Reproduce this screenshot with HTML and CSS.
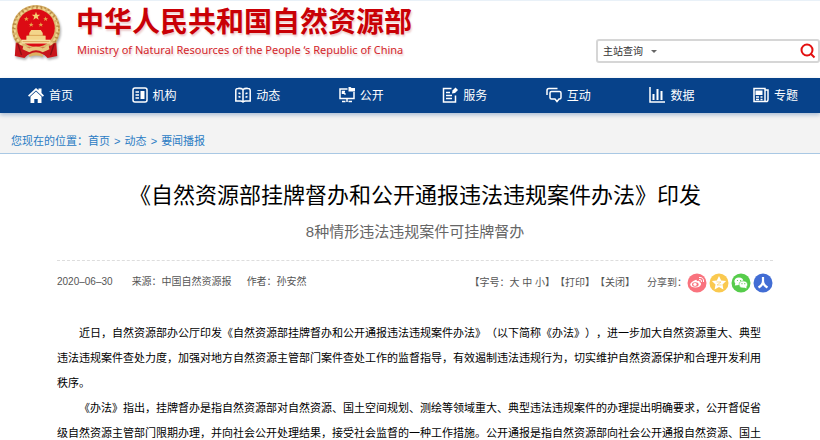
FILE: index.html
```
<!DOCTYPE html>
<html lang="zh-CN">
<head>
  <meta charset="utf-8">
  <title>《自然资源部挂牌督办和公开通报违法违规案件办法》印发</title>
  <link rel="stylesheet" href="styles.css">
</head>
<body>
  <header class="header">
    <a class="brand" href="#">
      <svg class="emblem" viewBox="0 0 54 58" aria-hidden="true">
        <path d="M6 40 L5 54 L15 56 L20 51 H34 L39 56 L49 54 L48 40Z" fill="#c8151b"/>
        <circle cx="27" cy="26" r="25" fill="#d9b56c"/>
        <circle cx="27" cy="26" r="23" fill="none" stroke="#b98a45" stroke-width="3" stroke-dasharray="2 2"/>
        <circle cx="27" cy="26" r="22" fill="none" stroke="#f0d591" stroke-width="2" stroke-dasharray="3 2"/>
        <circle cx="27" cy="25" r="19.500" fill="#dc0b14"/>
        <path d="M27 8l1.100 3.100h3.300l-2.600 2 1 3.200-2.800-1.900-2.800 1.900 1-3.200-2.600-2h3.300z" fill="#f5d071"/>
        <g fill="#e9a54b">
          <path d="M17 13l.7 1.600h1.800l-1.400 1.100.5 1.800-1.600-1-1.600 1 .5-1.800-1.400-1.100h1.800z"/>
          <path d="M37 13l.7 1.600h1.800l-1.400 1.100.5 1.800-1.600-1-1.600 1 .5-1.800-1.400-1.100h1.800z"/>
          <path d="M22 19l.7 1.600h1.800l-1.400 1.100.5 1.800-1.600-1-1.600 1 .5-1.800-1.400-1.100h1.800z"/>
          <path d="M32 19l.7 1.600h1.800l-1.400 1.100.5 1.800-1.600-1-1.600 1 .5-1.800-1.400-1.100h1.800z"/>
        </g>
        <path d="M22 27h10l2 3H20z M20 30h14v3H20z M17 33h20v5H17z" fill="#f3d58a"/>
        <path d="M12 37h30v4H12z" fill="#f7e3a6"/>
        <path d="M18 32.500h18 M13 39h28" stroke="#cf8a3c" stroke-width=".7"/>
        <path d="M7 40q8 7 20 5q12 2 20-5l1 9q-7 1-10 5l-4-2H20l-4 2q-3-4-10-5z" fill="#c8151b"/>
        <path d="M14 43l6 3q7-4 14 0l6-3 1 4-7 3q-7-4-14 0l-7-3z" fill="#e8c77d"/>
        <path d="M20 52q7-4 14 0v3q-7-3-14 0z" fill="#dcb262"/>
        <path d="M8 41l4 12 M46 41l-4 12" stroke="#8e0f14" stroke-width="1.500"/>
      </svg>
      <span class="brand-text">
        <span class="brand-cn">中华人民共和国自然资源部</span>
        <span class="brand-en">Ministry of Natural Resources of the People ‘s Republic of China</span>
      </span>
    </a>
    <form class="search" action="#">
      <span class="search-scope">
        <select class="search-select" aria-label="查询范围">
          <option>主站查询</option>
        </select>
      </span>
      <input class="search-input" type="text" aria-label="关键词">
      <button class="search-btn" type="submit" aria-label="搜索">
        <svg viewBox="0 0 16 16" width="16" height="16" fill="none" stroke="#e30f0f" stroke-width="2"><circle cx="7" cy="7" r="5.500"/><path d="M10.500 10.500l4 4"/></svg>
      </button>
    </form>
  </header>

  <nav class="nav">
    <a class="nav-item" href="#">
      <svg class="nav-icon" viewBox="0 0 16 16"><path d="M0 8.500L8 1l2.500 2.300V1.500h3v4.600L16 8.500l-1.200 1.200L8 3.500 1.200 9.700z" fill="#fff"/><path d="M2.500 9.500L8 4.600l5.500 4.900V16H9.700v-4H6.300v4H2.500z" fill="#fff"/></svg>首页</a>
    <a class="nav-item" href="#">
      <svg class="nav-icon" viewBox="0 0 16 16"><rect x="1" y="1" width="14" height="14" rx="2"/><path d="M3.500 5H7M3.500 8H7M3.500 11H7"/><path d="M8.500 4h4v8h-4z" fill="#fff" stroke="none"/></svg>机构</a>
    <a class="nav-item" href="#">
      <svg class="nav-icon" viewBox="0 0 16 16"><path d="M8 2.500Q6 1 3 1.500Q.8 1.500.8 3.500V14H5.500Q7 14 8 15q1-1 2.500-1h4.700V3.500q0-2-2.200-2Q10 1 8 2.500z"/><path d="M8 3v11M3.500 6l2 .7M3.500 9.500l2 .7M10.500 6.700l2-.7M10.500 10.200l2-.7"/></svg>动态</a>
    <a class="nav-item" href="#">
      <svg class="nav-icon" viewBox="0 0 16 16"><path d="M8.500 2H1v9.500h14V5"/><path d="M3.500 4.500l3 3M3.500 7V4.500H6M8 11.500V15M3 14.500h3.500M9.500 14.500H13"/><path d="M9.500 0h2l1 1H16v3.500H9.500z" fill="#fff" stroke="none"/></svg>公开</a>
    <a class="nav-item" href="#">
      <svg class="nav-icon" viewBox="0 0 16 16"><path d="M9.500 1.500H1.500V15h12V8.500M4 5.500h4M4 8.500h6M4 11.500h6"/><path d="M10 6.500l.5-3L13.500.5 16 3 13 6z" fill="#fff" stroke="none"/></svg>服务</a>
    <a class="nav-item" href="#">
      <svg class="nav-icon" viewBox="0 0 16 16"><path d="M1 8V3.500Q1 1.500 3 1.500h8.500M5.500 4.500h8q1.500 0 1.500 1.500v4.500q0 1.500-1.500 1.500H13l-2 2.500L9 12H5.500Q4 12 4 10.500V6q0-1.500 1.500-1.500z"/></svg>互动</a>
    <a class="nav-item" href="#">
      <svg class="nav-icon" viewBox="0 0 16 16"><path d="M1 0v15h15"/><path d="M4.500 7v6M8.500 2v11M12.500 4v9" stroke-width="2"/></svg>数据</a>
    <a class="nav-item" href="#">
      <svg class="nav-icon" viewBox="0 0 16 16"><path d="M12 1.500H1V14.500h13q1-.5 1-2V3h-3zM12 2v12"/><path d="M2.500 3.500h7V8h-7z" fill="#fff" stroke="none"/><path d="M3 10h3M3 12.500h3M7.500 10h2M7.500 12.500h2"/></svg>专题</a>
  </nav>

  <div class="crumbs">
    您现在的位置：<a href="#">首页</a> <span class="sep">&gt;</span> <a href="#">动态</a> <span class="sep">&gt;</span> <a href="#">要闻播报</a>
  </div>

  <main class="article">
    <h1 class="title">《自然资源部挂牌督办和公开通报违法违规案件办法》印发</h1>
    <p class="subtitle">8种情形违法违规案件可挂牌督办</p>

    <div class="meta">
      <div class="meta-info">
        <span class="date">2020–06–30</span>
        <span>来源：中国自然资源报</span>
        <span>作者：孙安然</span>
      </div>
      <div class="meta-tools">
        <span>【字号：<button type="button">大</button> <button type="button">中</button> <button type="button">小</button>】</span>
        <span>【<button type="button">打印</button>】</span>
        <span>【<button type="button">关闭</button>】</span>
        <span class="share-label">分享到：</span>
        <span class="share">
          <a href="#" aria-label="微博"><svg viewBox="0 0 20 20"><circle cx="10" cy="10" r="9.500" fill="#f9737e"/><path d="M8.500 7q1.500-.7 1.300 1.200 3-1 2.800.8 2 .7 1.400 2.500-1 3-5.500 3-5 0-5.300-3Q3.500 9 8.500 7z" fill="#fff"/><ellipse cx="8.300" cy="11.500" rx="3.300" ry="2.200" fill="#f9737e"/><ellipse cx="8" cy="11.500" rx="1.700" ry="1.400" fill="#fff"/><path d="M12 6.500q3-.5 2.500 2.500M12 4.500q5-.5 4.500 4.500" fill="none" stroke="#fff"/></svg></a>
          <a href="#" aria-label="QQ空间"><svg viewBox="0 0 20 20"><circle cx="10" cy="10" r="9.500" fill="#fac94f"/><path d="M10 3l2.200 4.400 4.900.7-3.600 3.400.9 4.900-4.400-2.400-4.400 2.400.9-4.900-3.600-3.400 4.900-.7z" fill="#fff"/><path d="M7.500 9h4.500l-4 3h4.500" fill="none" stroke="#fac94f" stroke-width=".6"/></svg></a>
          <a href="#" aria-label="微信"><svg viewBox="0 0 20 20"><circle cx="10" cy="10" r="9.500" fill="#56cc4b"/><path d="M3.800 12.500l.5-2A4.500 3.800 0 1 1 8 12z" fill="#fff"/><ellipse cx="12.300" cy="11.500" rx="4.200" ry="3.500" fill="#fff" stroke="#56cc4b" stroke-width=".6"/><path d="M13 14.500l2.500 1-.3-2z" fill="#fff"/><g fill="#56cc4b"><circle cx="6.500" cy="7.500" r=".6"/><circle cx="9.500" cy="7.500" r=".6"/><circle cx="11" cy="10.700" r=".6"/><circle cx="13.800" cy="10.700" r=".6"/></g></svg></a>
          <a href="#" aria-label="人人网"><svg viewBox="0 0 20 20"><circle cx="10" cy="10" r="9.500" fill="#426dd4"/><path d="M10 4v4q0 4-4.500 6.500M10 8q0 4 4.500 6.500" fill="none" stroke="#fff" stroke-width="2.200"/></svg></a>
        </span>
      </div>
    </div>

    <div class="content">
      <p>近日，自然资源部办公厅印发《自然资源部挂牌督办和公开通报违法违规案件办法》（以下简称《办法》），进一步加大自然资源重大、典型违法违规案件查处力度，加强对地方自然资源主管部门案件查处工作的监督指导，有效遏制违法违规行为，切实维护自然资源保护和合理开发利用秩序。</p>
      <p>《办法》指出，挂牌督办是指自然资源部对自然资源、国土空间规划、测绘等领域重大、典型违法违规案件的办理提出明确要求，公开督促省级自然资源主管部门限期办理，并向社会公开处理结果，接受社会监督的一种工作措施。公开通报是指自然资源部向社会公开通报自然资源、国土</p>
    </div>
  </main>
</body>
</html>
```

FILE: styles.css
```
* {
  box-sizing: border-box;
}

body {
  margin: 0;
  background-color: #fff;
  color: #000;
  font-family: "Liberation Sans", "Noto Sans CJK SC", sans-serif;
  font-size: 11px;
  text-spacing-trim: space-all;
}

a {
  color: inherit;
  text-decoration: none;
}

button,
input,
select {
  padding: 0;
  border: none;
  background: none;
  color: inherit;
  font: inherit;
}

/* header */
.header {
  display: flex;
  justify-content: space-between;
  height: 78px;
  border-top: 1px solid #e9f1f8;
}

.brand {
  display: flex;
  gap: 14px;
  padding: 3px 0 0 10px;
  color: #c90006;
}

.emblem {
  width: 52px;
  height: 56px;
  filter: drop-shadow(1px 2px 1px rgba(0, 0, 0, 0.3));
}

.brand-text {
  display: flex;
  flex-direction: column;
  padding-top: 1px;
  text-shadow: 1px 2px 2px rgba(160, 0, 0, 0.2);
  white-space: nowrap;
}

.brand-cn {
  font-size: 28px;
  font-weight: bold;
  line-height: 36px;
}

.brand-en {
  padding-left: 1px;
  color: #d3262b;
  font-family: "Noto Sans", sans-serif;
  font-size: 11px;
  line-height: 18px;
}

.search {
  display: flex;
  align-items: center;
  width: 224px;
  height: 24px;
  margin-top: 38px;
  border: 2px solid #d6d6d6;
  border-radius: 3px;
  color: #333;
  font-size: 10px;
}

.search-scope {
  display: flex;
  align-items: center;
  gap: 8px;
  padding-left: 5px;
}

.search-scope::after {
  content: "";
  border: 3px solid transparent;
  border-top-color: #666;
  border-bottom-width: 0;
}

.search-select {
  appearance: none;
}

.search-input {
  flex: 1;
  min-width: 0;
  outline: none;
}

.search-btn {
  display: flex;
  padding-right: 2px;
  cursor: pointer;
}

/* main navigation */
.nav {
  position: relative;
  display: flex;
  justify-content: space-between;
  align-items: center;
  height: 35px;
  padding: 0 22px 2px 28px;
  background-color: #07428a;
  box-shadow: 0 2px 4px rgba(7, 66, 138, 0.3);
  color: #fff;
  font-size: 12px;
}

.nav-item {
  display: flex;
  align-items: center;
  gap: 5px;
}

.nav-icon {
  width: 16px;
  height: 16px;
  fill: none;
  stroke: #fff;
  stroke-width: 1.5;
}

.nav-item:first-child .nav-icon {
  stroke: none;
}

.crumbs {
  padding: 18px 11px 2px;
  border-bottom: 1px solid #a9c8e4;
  background-color: #f3f3f3;
  color: #2b7cc4;
  line-height: 20px;
}

.sep {
  margin: 0 1px;
}

/* article */
.article {
  padding: 26px 47px 0 57px;
}

.title {
  margin: 0;
  font-size: 22px;
  font-weight: normal;
  line-height: 32px;
  text-align: center;
}

.subtitle {
  margin: 8px 0 16px;
  color: #666;
  font-size: 15px;
  line-height: 24px;
  text-align: center;
}

.meta {
  display: flex;
  justify-content: space-between;
  padding-top: 12px;
  border-top: 1px dashed #ddd;
  color: #555;
  font-size: 10px;
  line-height: 18px;
}

.meta-info {
  display: flex;
  gap: 15px;
}

.date {
  margin-right: 4px;
}

.meta-tools {
  display: flex;
  align-items: center;
}

.meta-tools button {
  cursor: pointer;
}

.share-label {
  margin-left: 12px;
}

.share {
  display: flex;
  gap: 2px;
}

.share svg {
  display: block;
  width: 20px;
  height: 20px;
}

.content {
  padding: 28px 10px 0 0;
  line-height: 25px;
}

.content p {
  margin: 0;
  text-indent: 2em;
}
```
